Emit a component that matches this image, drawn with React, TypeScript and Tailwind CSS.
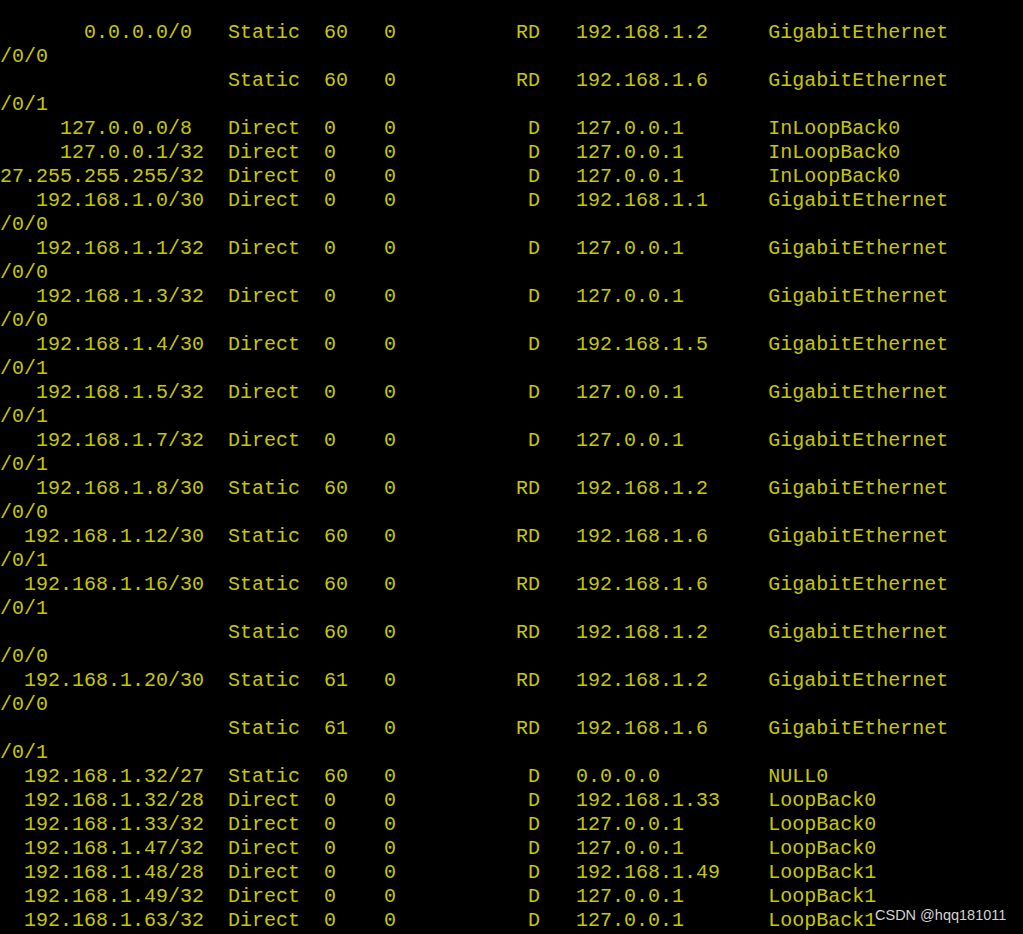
import React from 'react';

type Route = {
  dest?: string;
  proto: string;
  pre: string;
  cost: string;
  flags: string;
  nextHop: string;
  iface: string;
  wrap?: string;
};

const routes: Route[] = [
  { dest: '0.0.0.0/0', proto: 'Static', pre: '60', cost: '0', flags: 'RD', nextHop: '192.168.1.2', iface: 'GigabitEthernet', wrap: '0/0/0' },
  { proto: 'Static', pre: '60', cost: '0', flags: 'RD', nextHop: '192.168.1.6', iface: 'GigabitEthernet', wrap: '0/0/1' },
  { dest: '127.0.0.0/8', proto: 'Direct', pre: '0', cost: '0', flags: 'D', nextHop: '127.0.0.1', iface: 'InLoopBack0' },
  { dest: '127.0.0.1/32', proto: 'Direct', pre: '0', cost: '0', flags: 'D', nextHop: '127.0.0.1', iface: 'InLoopBack0' },
  { dest: '127.255.255.255/32', proto: 'Direct', pre: '0', cost: '0', flags: 'D', nextHop: '127.0.0.1', iface: 'InLoopBack0' },
  { dest: '192.168.1.0/30', proto: 'Direct', pre: '0', cost: '0', flags: 'D', nextHop: '192.168.1.1', iface: 'GigabitEthernet', wrap: '0/0/0' },
  { dest: '192.168.1.1/32', proto: 'Direct', pre: '0', cost: '0', flags: 'D', nextHop: '127.0.0.1', iface: 'GigabitEthernet', wrap: '0/0/0' },
  { dest: '192.168.1.3/32', proto: 'Direct', pre: '0', cost: '0', flags: 'D', nextHop: '127.0.0.1', iface: 'GigabitEthernet', wrap: '0/0/0' },
  { dest: '192.168.1.4/30', proto: 'Direct', pre: '0', cost: '0', flags: 'D', nextHop: '192.168.1.5', iface: 'GigabitEthernet', wrap: '0/0/1' },
  { dest: '192.168.1.5/32', proto: 'Direct', pre: '0', cost: '0', flags: 'D', nextHop: '127.0.0.1', iface: 'GigabitEthernet', wrap: '0/0/1' },
  { dest: '192.168.1.7/32', proto: 'Direct', pre: '0', cost: '0', flags: 'D', nextHop: '127.0.0.1', iface: 'GigabitEthernet', wrap: '0/0/1' },
  { dest: '192.168.1.8/30', proto: 'Static', pre: '60', cost: '0', flags: 'RD', nextHop: '192.168.1.2', iface: 'GigabitEthernet', wrap: '0/0/0' },
  { dest: '192.168.1.12/30', proto: 'Static', pre: '60', cost: '0', flags: 'RD', nextHop: '192.168.1.6', iface: 'GigabitEthernet', wrap: '0/0/1' },
  { dest: '192.168.1.16/30', proto: 'Static', pre: '60', cost: '0', flags: 'RD', nextHop: '192.168.1.6', iface: 'GigabitEthernet', wrap: '0/0/1' },
  { proto: 'Static', pre: '60', cost: '0', flags: 'RD', nextHop: '192.168.1.2', iface: 'GigabitEthernet', wrap: '0/0/0' },
  { dest: '192.168.1.20/30', proto: 'Static', pre: '61', cost: '0', flags: 'RD', nextHop: '192.168.1.2', iface: 'GigabitEthernet', wrap: '0/0/0' },
  { proto: 'Static', pre: '61', cost: '0', flags: 'RD', nextHop: '192.168.1.6', iface: 'GigabitEthernet', wrap: '0/0/1' },
  { dest: '192.168.1.32/27', proto: 'Static', pre: '60', cost: '0', flags: 'D', nextHop: '0.0.0.0', iface: 'NULL0' },
  { dest: '192.168.1.32/28', proto: 'Direct', pre: '0', cost: '0', flags: 'D', nextHop: '192.168.1.33', iface: 'LoopBack0' },
  { dest: '192.168.1.33/32', proto: 'Direct', pre: '0', cost: '0', flags: 'D', nextHop: '127.0.0.1', iface: 'LoopBack0' },
  { dest: '192.168.1.47/32', proto: 'Direct', pre: '0', cost: '0', flags: 'D', nextHop: '127.0.0.1', iface: 'LoopBack0' },
  { dest: '192.168.1.48/28', proto: 'Direct', pre: '0', cost: '0', flags: 'D', nextHop: '192.168.1.49', iface: 'LoopBack1' },
  { dest: '192.168.1.49/32', proto: 'Direct', pre: '0', cost: '0', flags: 'D', nextHop: '127.0.0.1', iface: 'LoopBack1' },
  { dest: '192.168.1.63/32', proto: 'Direct', pre: '0', cost: '0', flags: 'D', nextHop: '127.0.0.1', iface: 'LoopBack1' },
];

// terminal is 80 columns wide; the screenshot crops off column 0
const padTo = (s: string, col: number) => s.padEnd(col, ' ');

const formatRoute = (r: Route) => {
  let line = '';
  if (r.dest) {
    const [ip, mask] = r.dest.split('/');
    line = ip.padStart(15, ' ') + '/' + mask;
  }
  line = padTo(line, 20) + r.proto;
  line = padTo(line, 28) + r.pre;
  line = padTo(line, 33) + r.cost;
  line = padTo(line, 46 - r.flags.length) + r.flags;
  line = padTo(line, 49) + r.nextHop;
  line = padTo(line, 65) + r.iface;
  return line;
};

const lines: string[] = routes
  .flatMap((r) => (r.wrap ? [formatRoute(r), r.wrap] : [formatRoute(r)]))
  .map((l) => l.slice(1));

export default function App() {
  return (
    <div className="relative w-[1023px] h-[934px] bg-black overflow-hidden">
      <div className="pt-[21px] whitespace-pre text-[20px] leading-[24px] text-[#c8c800] font-['Liberation_Mono',monospace]">
        {lines.map((line, i) => (
          <div key={i} className="h-[24px]">
            {line}
          </div>
        ))}
      </div>

      {/* watermark */}
      <div className="absolute left-[875px] top-[905px] text-[14.5px] leading-[20px] text-[#d4d4d4] font-['Liberation_Sans',Arial,sans-serif]">
        CSDN @hqq181011
      </div>
    </div>
  );
}
